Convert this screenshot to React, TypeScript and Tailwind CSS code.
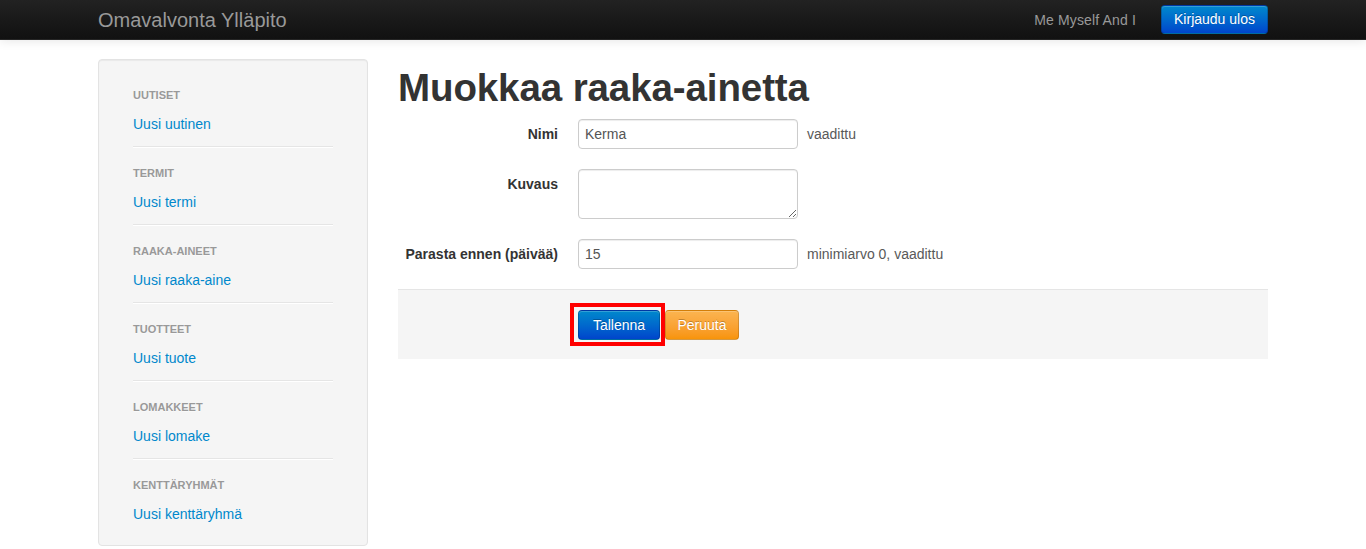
import React from 'react';

const sections = [
  { title: 'Uutiset', link: 'Uusi uutinen' },
  { title: 'Termit', link: 'Uusi termi' },
  { title: 'Raaka-aineet', link: 'Uusi raaka-aine' },
  { title: 'Tuotteet', link: 'Uusi tuote' },
  { title: 'Lomakkeet', link: 'Uusi lomake' },
  { title: 'Kenttäryhmät', link: 'Uusi kenttäryhmä' },
];

// Shared input look (bootstrap 2 style)
const inputClass =
  'w-[220px] h-[30px] px-[6px] py-[4px] text-[14px] leading-[20px] text-[#555] bg-white border border-[#ccc] rounded-[4px] shadow-[inset_0_1px_1px_rgba(0,0,0,0.075)] outline-none';

function Navbar() {
  return (
    <div className="relative z-10 h-10 bg-gradient-to-b from-[#222] to-[#111] border-b border-[#252525] shadow-[0_1px_10px_rgba(0,0,0,0.1)]">
      <div className="w-[1170px] mx-auto h-full flex items-center justify-between">
        <a href="#" className="text-[20px] leading-[20px] text-[#999] font-light">
          Omavalvonta Ylläpito
        </a>
        <div className="flex items-center">
          <span className="text-[14px] text-[#999] leading-[20px] tracking-[0.15px]">Me Myself And I</span>
          <button className="ml-[25px] mb-[1px] w-[107px] h-[29px] text-[14px] leading-[20px] text-white rounded-[4px] bg-gradient-to-b from-[#0088cc] to-[#0044cc] border border-black/20 [text-shadow:0_-1px_0_rgba(0,0,0,0.25)] shadow-[inset_0_1px_0_rgba(255,255,255,0.2)]">
            Kirjaudu ulos
          </button>
        </div>
      </div>
    </div>
  );
}

function Sidebar() {
  return (
    <div className="w-[270px] bg-[#f5f5f5] border border-[#e3e3e3] rounded-[4px] shadow-[inset_0_1px_1px_rgba(0,0,0,0.05)] pt-[25px] pb-[21px] px-[34px]">
      {sections.map((s, i) => (
        <div key={s.title}>
          <div className="h-5 text-[11px] leading-[20px] font-bold uppercase text-[#999] [text-shadow:0_1px_0_rgba(255,255,255,0.5)]">
            {s.title}
          </div>
          <a href="#" className="block mt-[9px] h-5 text-[14px] leading-[20px] text-[#0088cc]">
            {s.link}
          </a>
          {i < sections.length - 1 && (
            <div className="mt-[12px] mb-[15px] h-px bg-[#e5e5e5] border-b border-white box-content" />
          )}
        </div>
      ))}
    </div>
  );
}

function FormRow({ label, children, help }: { label: string; children: React.ReactNode; help?: string }) {
  return (
    <div className="flex items-start mb-5">
      <label className="w-[160px] pt-[5px] text-right text-[14px] leading-[20px] font-bold text-[#333] whitespace-nowrap">{label}</label>
      <div className="ml-5 flex items-center">
        {children}
        {help && <span className="ml-[9px] text-[14px] leading-[20px] text-[#595959]">{help}</span>}
      </div>
    </div>
  );
}

export default function App() {
  return (
    <div className="min-h-screen bg-white text-[#333] text-[14px] leading-[20px]" style={{ fontFamily: '"Liberation Sans", Arial, sans-serif' }}>
      <Navbar />
      <div className="w-[1170px] mx-auto mt-[19px] flex items-start gap-[30px]">
        <Sidebar />
        <div className="w-[870px]">
          <h1 className="mt-[9px] mb-[11px] text-[38.5px] leading-[40px] font-bold text-[#333] tracking-[-0.1px]">Muokkaa raaka-ainetta</h1>
          <form>
            <FormRow label="Nimi" help="vaadittu">
              <input className={inputClass} defaultValue="Kerma" />
            </FormRow>
            <FormRow label="Kuvaus">
              <textarea className={inputClass + ' h-[50px] block'} />
            </FormRow>
            <FormRow label="Parasta ennen (päivää)" help="minimiarvo 0, vaadittu">
              <input className={inputClass} defaultValue="15" />
            </FormRow>
            <div className="h-[70px] bg-[#f5f5f5] border-t border-[#e5e5e5] pl-[172px] flex items-center">
              <div className="border-4 border-[#ff0000] pl-[4px] pr-[1px] pt-[3px] pb-[2px]">
                <button type="button" className="block w-[82px] h-[30px] text-[14px] leading-[20px] text-white rounded-[4px] bg-gradient-to-b from-[#0088cc] to-[#0044cc] border border-black/20 [text-shadow:0_-1px_0_rgba(0,0,0,0.25)] shadow-[inset_0_1px_0_rgba(255,255,255,0.2)]">
                  Tallenna
                </button>
              </div>
              <button type="button" className="w-[74px] h-[30px] text-[14px] leading-[20px] text-white rounded-[4px] bg-gradient-to-b from-[#fbb450] to-[#f89406] border border-black/15 [text-shadow:0_-1px_0_rgba(0,0,0,0.25)] shadow-[inset_0_1px_0_rgba(255,255,255,0.2)]">
                Peruuta
              </button>
            </div>
          </form>
        </div>
      </div>
    </div>
  );
}
